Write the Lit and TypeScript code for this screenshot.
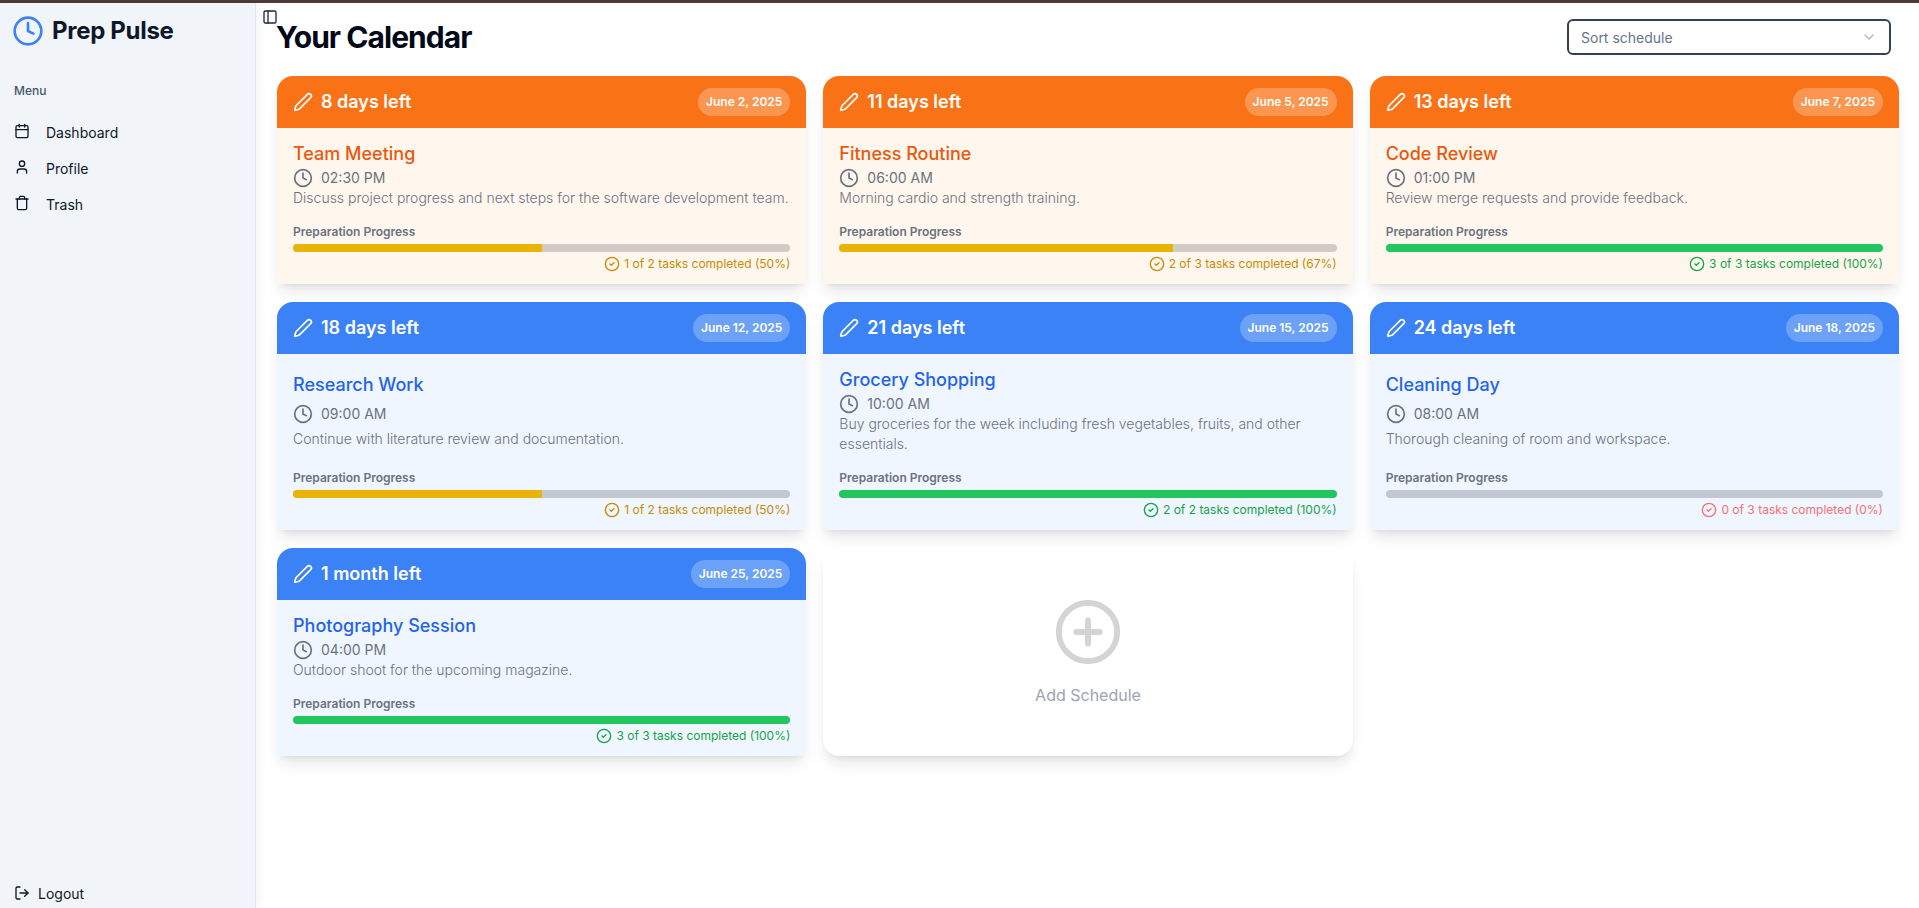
import { LitElement, html, css, svg } from "lit";
import { customElement, property } from "lit/decorators.js";

const icon = (size: number, body: unknown, stroke = 2) => html`
  <svg class="ic" width=${size} height=${size} viewBox="0 0 24 24" fill="none" stroke="currentColor"
    stroke-width=${stroke} stroke-linecap="round" stroke-linejoin="round">${body}</svg>
`;

const clockPath = svg`<circle cx="12" cy="12" r="10"></circle><polyline points="12 6 12 12 16 14"></polyline>`;
const penPath = svg`<path d="M21.174 6.812a1 1 0 0 0-3.986-3.987L3.842 16.174a2 2 0 0 0-.5.83l-1.321 4.352a.5.5 0 0 0 .623.622l4.353-1.32a2 2 0 0 0 .83-.497z"></path>`;
const checkPath = svg`<circle cx="12" cy="12" r="10"></circle><path d="m9 12 2 2 4-4"></path>`;
const calendarPath = svg`<path d="M8 2v4"></path><path d="M16 2v4"></path><rect width="18" height="18" x="3" y="4" rx="2"></rect><path d="M3 10h18"></path>`;
const userPath = svg`<path d="M19 21v-2a4 4 0 0 0-4-4H9a4 4 0 0 0-4 4v2"></path><circle cx="12" cy="7" r="4"></circle>`;
const trashPath = svg`<path d="M3 6h18"></path><path d="M19 6v14c0 1-1 2-2 2H7c-1 0-2-1-2-2V6"></path><path d="M8 6V4c0-1 1-2 2-2h4c1 0 2 1 2 2v2"></path>`;
const logoutPath = svg`<path d="M9 21H5a2 2 0 0 1-2-2V5a2 2 0 0 1 2-2h4"></path><polyline points="16 17 21 12 16 7"></polyline><line x1="21" x2="9" y1="12" y2="12"></line>`;
const panelPath = svg`<rect width="18" height="18" x="3" y="3" rx="2"></rect><path d="M9 3v18"></path>`;
const plusPath = svg`<circle cx="12" cy="12" r="10"></circle><path d="M8 12h8"></path><path d="M12 8v8"></path>`;
const chevronPath = svg`<path d="m6 9 6 6 6-6"></path>`;

type Schedule = {
  left: string;
  date: string;
  title: string;
  time: string;
  desc: string;
  done: number;
  total: number;
  tone: "orange" | "blue";
};

const schedules: Schedule[] = [
  { left: "8 days left", date: "June 2, 2025", title: "Team Meeting", time: "02:30 PM", desc: "Discuss project progress and next steps for the software development team.", done: 1, total: 2, tone: "orange" },
  { left: "11 days left", date: "June 5, 2025", title: "Fitness Routine", time: "06:00 AM", desc: "Morning cardio and strength training.", done: 2, total: 3, tone: "orange" },
  { left: "13 days left", date: "June 7, 2025", title: "Code Review", time: "01:00 PM", desc: "Review merge requests and provide feedback.", done: 3, total: 3, tone: "orange" },
  { left: "18 days left", date: "June 12, 2025", title: "Research Work", time: "09:00 AM", desc: "Continue with literature review and documentation.", done: 1, total: 2, tone: "blue" },
  { left: "21 days left", date: "June 15, 2025", title: "Grocery Shopping", time: "10:00 AM", desc: "Buy groceries for the week including fresh vegetables, fruits, and other essentials.", done: 2, total: 2, tone: "blue" },
  { left: "24 days left", date: "June 18, 2025", title: "Cleaning Day", time: "08:00 AM", desc: "Thorough cleaning of room and workspace.", done: 0, total: 3, tone: "blue" },
  { left: "1 month left", date: "June 25, 2025", title: "Photography Session", time: "04:00 PM", desc: "Outdoor shoot for the upcoming magazine.", done: 3, total: 3, tone: "blue" },
];

@customElement("schedule-card")
export class ScheduleCard extends LitElement {
  @property({ attribute: false }) item!: Schedule;

  static styles = css`
    :host {
      display: flex;
      flex-direction: column;
      border-radius: 16px 16px 3px 3px;
      overflow: hidden;
      box-shadow: 0 10px 15px -3px rgba(0, 0, 0, 0.1), 0 4px 6px -4px rgba(0, 0, 0, 0.1);
    }
    .ic {
      flex: none;
      display: block;
    }
    .head {
      display: flex;
      align-items: center;
      justify-content: space-between;
      padding: 12px 16px;
      color: #fff;
    }
    .orange .head {
      background: #f97316;
    }
    .blue .head {
      background: #3b82f6;
    }
    .left {
      display: flex;
      align-items: center;
      gap: 8px;
      font-size: 18px;
      line-height: 28px;
      font-weight: 600;
    }
    .date {
      padding: 6px 8px;
      border-radius: 999px;
      background: rgba(255, 255, 255, 0.25);
      font-size: 12px;
      line-height: 16px;
      font-weight: 600;
    }
    .card {
      flex: 1;
      display: flex;
      flex-direction: column;
    }
    .body {
      flex: 1;
      display: flex;
      flex-direction: column;
      padding: 12px 16px;
    }
    .orange .body {
      background: #fff7ed;
    }
    .blue .body {
      background: #eff6ff;
    }
    .text {
      flex: 1;
      display: flex;
      flex-direction: column;
      justify-content: space-evenly;
    }
    .title {
      font-size: 18px;
      line-height: 28px;
      font-weight: 500;
    }
    .orange .title {
      color: #ea580c;
    }
    .blue .title {
      color: #2563eb;
    }
    .time {
      display: flex;
      align-items: center;
      gap: 8px;
      font-size: 14px;
      line-height: 20px;
      color: #6b7280;
    }
    .desc {
      font-size: 14px;
      line-height: 20px;
      font-weight: 300;
      color: #6b7280;
    }
    .label {
      margin-top: 16px;
      margin-bottom: 4px;
      font-size: 12px;
      line-height: 16px;
      font-weight: 600;
      color: #6b7280;
    }
    .track {
      height: 8px;
      border-radius: 999px;
      overflow: hidden;
    }
    .orange .track {
      background: #d0cbc4;
    }
    .blue .track {
      background: #c1c8d3;
    }
    .fill {
      height: 100%;
    }
    .status {
      margin-top: 4px;
      display: flex;
      align-items: center;
      justify-content: flex-end;
      gap: 4px;
      font-size: 12px;
      line-height: 16px;
    }
    .mid .fill {
      background: #eab308;
    }
    .full .fill {
      background: #22c55e;
    }
    .mid .status {
      color: #ca8a04;
    }
    .full .status {
      color: #16a34a;
    }
    .none .status {
      color: #f87171;
    }
  `;

  render() {
    const { left, date, title, time, desc, done, total, tone } = this.item;
    const pct = Math.round((done / total) * 100);
    const level = pct === 100 ? "full" : pct === 0 ? "none" : "mid";
    return html`
      <div class="card ${tone} ${level}">
        <div class="head">
          <div class="left">${icon(20, penPath)}${left}</div>
          <div class="date">${date}</div>
        </div>
        <div class="body">
          <div class="text">
            <div class="title">${title}</div>
            <div class="time">${icon(20, clockPath)}${time}</div>
            <div class="desc">${desc}</div>
          </div>
          <div class="label">Preparation Progress</div>
          <div class="track"><div class="fill" style="width: ${pct}%"></div></div>
          <div class="status">${icon(16, checkPath)}${done} of ${total} tasks completed (${pct}%)</div>
        </div>
      </div>
    `;
  }
}

@customElement("app-root")
export class AppRoot extends LitElement {
  static styles = css`
    :host {
      display: flex;
      flex-direction: column;
      height: 908px;
      overflow: hidden;
      background: #fff;
      font-family: Inter, "Liberation Sans", sans-serif;
      color: #020817;
    }
    .ic {
      flex: none;
      display: block;
    }
    .strip {
      flex: none;
      height: 3px;
      background: #4f3a38;
    }
    .shell {
      flex: 1;
      display: flex;
      min-height: 0;
    }
    .side {
      flex: none;
      width: 255px;
      display: flex;
      flex-direction: column;
      background: #f1f5f9;
      border-right: 1px solid #e2e8f0;
      box-shadow: 2px 0 12px rgba(0, 0, 0, 0.05);
    }
    .brand {
      display: flex;
      align-items: center;
      gap: 8px;
      padding: 12px 12px 10px;
      font-size: 24px;
      line-height: 32px;
      font-weight: 700;
      letter-spacing: -0.3px;
      color: #0f172a;
    }
    .brand .ic {
      color: #3b82f6;
    }
    .menu-label {
      margin-top: 26px;
      padding: 0 14px;
      font-size: 12px;
      line-height: 16px;
      font-weight: 500;
      color: #475569;
    }
    nav {
      margin-top: 15px;
      display: flex;
      flex-direction: column;
    }
    .item {
      display: flex;
      align-items: center;
      gap: 16px;
      height: 36px;
      padding: 0 14px;
      font-size: 14px;
      color: #0f172a;
    }
    nav .ic {
      margin-top: -3px;
    }
    .logout {
      margin-top: auto;
      gap: 8px;
      height: 30px;
    }
    main {
      position: relative;
      flex: 1;
      min-width: 0;
      padding: 16px 20px 0 21px;
    }
    .trigger {
      position: absolute;
      left: 6px;
      top: 6px;
      color: #1e293b;
    }
    .top {
      display: flex;
      align-items: center;
      justify-content: space-between;
      margin-bottom: 21px;
    }
    h1 {
      margin: 0 0 0 -1px;
      font-size: 30px;
      line-height: 36px;
      font-weight: 700;
      letter-spacing: -0.95px;
    }
    .sort {
      width: 324px;
      height: 36px;
      box-sizing: border-box;
      margin-right: 8px;
      padding: 0 12px;
      display: flex;
      align-items: center;
      justify-content: space-between;
      border: 2px solid #334155;
      border-radius: 6px;
      font-size: 14px;
      color: #64748b;
    }
    .sort .ic {
      opacity: 0.5;
    }
    .grid {
      display: grid;
      grid-template-columns: repeat(3, 1fr);
      gap: 18px 17px;
    }
    .add {
      display: flex;
      flex-direction: column;
      align-items: center;
      justify-content: center;
      gap: 16px;
      border-radius: 16px;
      background: #fff;
      color: #d4d4d4;
      box-shadow: 0 10px 15px -3px rgba(0, 0, 0, 0.1), 0 4px 6px -4px rgba(0, 0, 0, 0.1);
    }
    .add span {
      font-size: 16px;
      line-height: 24px;
      color: #9ca3af;
    }
  `;

  render() {
    return html`
      <div class="strip"></div>
      <div class="shell">
        <aside class="side">
          <div class="brand">${icon(32, clockPath)}Prep Pulse</div>
          <div class="menu-label">Menu</div>
          <nav>
            <div class="item">${icon(16, calendarPath)}Dashboard</div>
            <div class="item">${icon(16, userPath)}Profile</div>
            <div class="item">${icon(16, trashPath)}Trash</div>
          </nav>
          <div class="item logout">${icon(16, logoutPath)}Logout</div>
        </aside>
        <main>
          <div class="trigger">${icon(16, panelPath)}</div>
          <div class="top">
            <h1>Your Calendar</h1>
            <div class="sort">Sort schedule ${icon(16, chevronPath)}</div>
          </div>
          <div class="grid">
            ${schedules.map((s) => html`<schedule-card .item=${s}></schedule-card>`)}
            <div class="add">${icon(70, plusPath)}<span>Add Schedule</span></div>
          </div>
        </main>
      </div>
    `;
  }
}
